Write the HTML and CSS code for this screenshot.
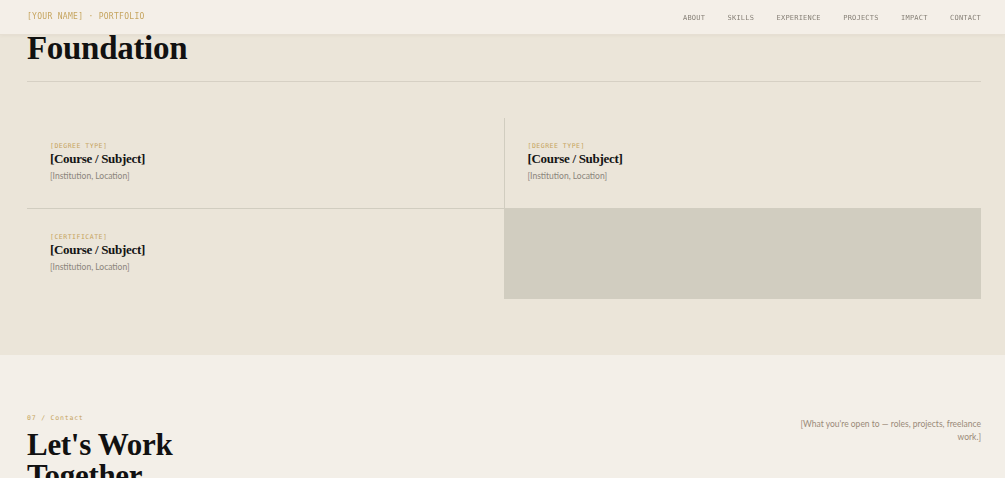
FILE: index.html
```html
<!DOCTYPE html>
<html lang="en">
<head>
  <meta charset="UTF-8" />
  <meta name="viewport" content="width=device-width, initial-scale=1.0"/>
  <title>[Your Name] - Portfolio</title>
  <link rel="stylesheet" href="styles.css">
</head>
<body>

  <header class="topbar">
    <div class="logo">[YOUR NAME] · PORTFOLIO</div>
    <nav>
      <a href="#">About</a>
      <a href="#">Skills</a>
      <a href="#">Experience</a>
      <a href="#">Projects</a>
      <a href="#">Impact</a>
      <a href="#">Contact</a>
    </nav>
  </header>

  <!-- Education -->
  <section class="education">
    <h2 class="section-title">Foundation</h2>

    <div class="edu-grid">
      <div class="edu-card">
        <div class="edu-type">[Degree Type]</div>
        <h3>[Course / Subject]</h3>
        <p>[Institution, Location]</p>
      </div>
      <div class="edu-card">
        <div class="edu-type">[Degree Type]</div>
        <h3>[Course / Subject]</h3>
        <p>[Institution, Location]</p>
      </div>
      <div class="edu-card">
        <div class="edu-type">[Certificate]</div>
        <h3>[Course / Subject]</h3>
        <p>[Institution, Location]</p>
      </div>
    </div>
  </section>

  <!-- Contact -->
  <section class="contact">
    <div class="contact-head">
      <div>
        <div class="section-label">07 / Contact</div>
        <h2 class="contact-title">Let's Work<br>Together</h2>
      </div>
      <p class="contact-note">[What you're open to — roles, projects, freelance work.]</p>
    </div>
  </section>

</body>
</html>
```

FILE: styles.css
```css
* {
  margin: 0;
  padding: 0;
  box-sizing: border-box;
}

body {
  font-family: 'Lato', 'Liberation Sans', sans-serif;
  background: #f3efe8;
  color: #111;
}

/* Top bar stays over the page */
.topbar {
  position: fixed;
  top: 0;
  left: 0;
  right: 0;
  height: 35px;
  padding: 1px 24px 0 27px;
  display: flex;
  justify-content: space-between;
  align-items: center;
  background: rgba(244, 239, 232, 0.96);
  border-bottom: 1px solid #e6dfd3;
  box-shadow: 0 1px 3px rgba(120, 100, 70, 0.06);
  z-index: 10;
}

.logo {
  font-family: 'DejaVu Sans Mono', 'Liberation Mono', monospace;
  font-size: 8px;
  letter-spacing: 0.3px;
  color: #c6a45e;
  margin-top: -2px;
}

nav {
  display: flex;
  align-items: center;
  gap: 22.5px;
}

nav a {
  font-family: 'DejaVu Sans Mono', 'Liberation Mono', monospace;
  font-size: 7px;
  letter-spacing: 0.2px;
  text-transform: uppercase;
  text-decoration: none;
  color: #867f76;
}

/* Education */
.education {
  background: #ebe5d9;
  padding: 30px 24px 56px 27px;
}

.section-title {
  font-family: 'Liberation Serif', 'DejaVu Serif', serif;
  font-weight: bold;
  font-size: 33px;
  line-height: 36px;
  letter-spacing: -0.3px;
  padding-bottom: 15px;
  border-bottom: 1px solid #d6d0c4;
}

.edu-grid {
  margin-top: 36px;
  display: grid;
  grid-template-columns: 1fr 1fr;
  grid-auto-rows: 90px;
  gap: 1px;
  background: #d1cdc0;
}

.edu-card {
  background: #ebe5d9;
  padding: 24px 23px;
}

.edu-type {
  font-family: 'DejaVu Sans Mono', 'Liberation Mono', monospace;
  font-size: 6.5px;
  line-height: 8px;
  letter-spacing: 0.5px;
  text-transform: uppercase;
  color: #c6a45e;
}

.edu-card h3 {
  font-family: 'Liberation Serif', 'DejaVu Serif', serif;
  font-weight: bold;
  font-size: 13px;
  line-height: 17px;
  letter-spacing: -0.3px;
  color: #141414;
}

.edu-card p {
  margin-top: 3px;
  font-size: 8.5px;
  line-height: 12px;
  color: #8a847b;
}

/* Contact */
.contact {
  background: #f3efe8;
  padding: 59px 24px 40px 27px;
}

.contact-head {
  display: flex;
  justify-content: space-between;
  align-items: flex-start;
}

.section-label {
  font-family: 'DejaVu Sans Mono', 'Liberation Mono', monospace;
  font-size: 6.5px;
  line-height: 9px;
  letter-spacing: 0.8px;
  color: #c6a45e;
}

.contact-title {
  margin-top: 6px;
  font-family: 'Liberation Serif', 'DejaVu Serif', serif;
  font-weight: bold;
  font-size: 31px;
  line-height: 31px;
  letter-spacing: -0.3px;
}

.contact-note {
  margin-top: 4px;
  max-width: 190px;
  text-align: right;
  font-size: 8.5px;
  line-height: 13px;
  color: #9a8a78;
}
```
